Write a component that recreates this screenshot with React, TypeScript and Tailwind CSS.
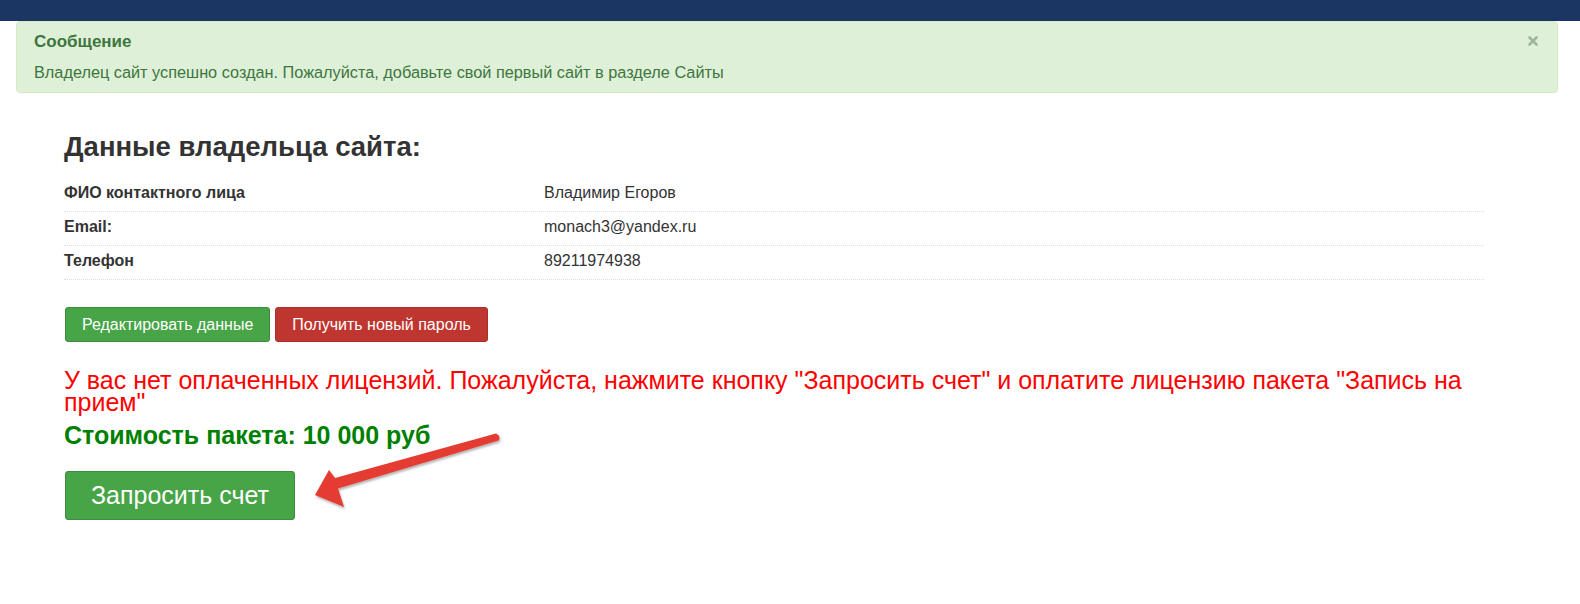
import { X } from "lucide-react";

const rows = [
  { label: "ФИО контактного лица", value: "Владимир Егоров" },
  { label: "Email:", value: "monach3@yandex.ru" },
  { label: "Телефон", value: "89211974938" },
];

function Arrow() {
  return (
    <svg className="absolute left-[300px] top-[424px]" width="210" height="90" viewBox="0 0 210 90">
      <defs>
        <filter id="sh" x="-10%" y="-10%" width="130%" height="140%">
          <feDropShadow dx="1" dy="2" stdDeviation="1.2" floodColor="#000" floodOpacity="0.3" />
        </filter>
      </defs>
      <path
        d="M196 9.5 L35 54 L29 46 L15 71 L44 83 L38 64.5 L198.5 16.5 Q201.5 12 196 9.5 Z"
        fill="#e43b30"
        filter="url(#sh)"
      />
    </svg>
  );
}

export default function App() {
  return (
    <div className="relative w-[1580px] h-[604px] bg-white font-['Liberation_Sans',Arial,sans-serif] text-[#333]">
      {/* top nav strip */}
      <div className="h-[21px] bg-[#1b3663]" />

      {/* alert */}
      <div className="ml-[16px] mr-[22px] h-[72px] bg-[#dff0d8] border border-[#d6e9c6] rounded-[4px] pl-[17px] pt-[9px] text-[#3c763d] relative">
        <div className="text-[17px] font-bold leading-[22px]">Сообщение</div>
        <div className="text-[16.3px] leading-[20px] mt-[9px]">
          Владелец сайт успешно создан. Пожалуйста, добавьте свой первый сайт в разделе Сайты
        </div>
        <button className="absolute right-[17px] top-[12px] text-[#9fb59a]">
          <X className="w-[14px] h-[14px]" strokeWidth={4.5} />
        </button>
      </div>

      {/* owner data */}
      <div className="pl-[64px] w-[1484px]">
        <h3 className="mt-[38px] text-[27.5px] font-bold leading-[32px] text-[#333]">Данные владельца сайта:</h3>
        <div className="mt-[15px]">
          {rows.map((r) => (
            <div key={r.label} className="flex items-center h-[34px] pb-[4px] border-b border-dotted border-[#ddd] text-[16px]">
              <div className="w-[480px] font-bold text-[#333]">{r.label}</div>
              <div className="text-[#333]">{r.value}</div>
            </div>
          ))}
        </div>

        <div className="flex gap-[5px] mt-[27px] pl-[1px]">
          <button className="h-[35px] px-[16px] bg-[#47a447] border border-[#3d8b3d] rounded-[3px] text-white text-[16px]">
            Редактировать данные
          </button>
          <button className="h-[35px] px-[16px] bg-[#bf3630] border border-[#a8302b] rounded-[3px] text-white text-[16px]">
            Получить новый пароль
          </button>
        </div>

        <p className="mt-[27px] text-[25px] leading-[22px] text-[#ff0000]">
          У вас нет оплаченных лицензий. Пожалуйста, нажмите кнопку "Запросить счет" и оплатите лицензию пакета "Запись на прием"
        </p>
        <p className="mt-[8px] text-[25px] font-bold leading-[28px] text-[#008000]">Стоимость пакета: 10 000 руб</p>

        <button className="mt-[22px] ml-[1px] h-[49px] px-[25px] bg-[#47a447] border border-[#3d8b3d] rounded-[3px] text-white text-[25px]">
          Запросить счет
        </button>
      </div>

      <Arrow />
    </div>
  );
}
